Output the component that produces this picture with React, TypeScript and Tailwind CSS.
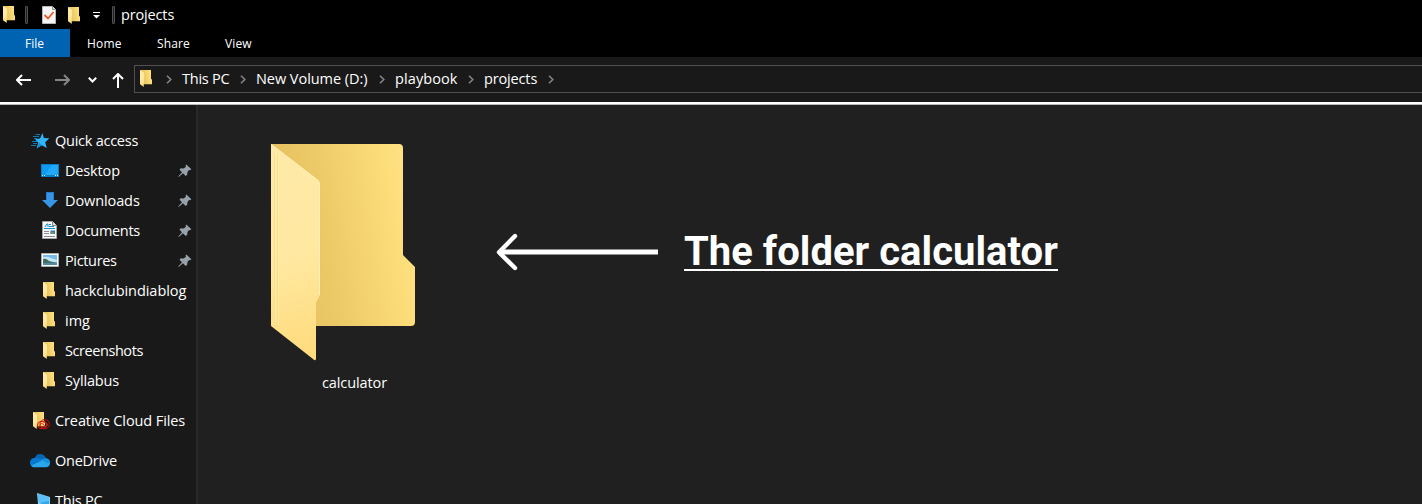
import React, { useId } from "react";

function Folder({ className, detailed = false }: { className: string; detailed?: boolean }) {
  const id = useId().replace(/:/g, "");
  return (
    <svg className={className} viewBox="0 0 144 217" preserveAspectRatio="none">
      <defs>
        <linearGradient id={`${id}b`} gradientUnits="userSpaceOnUse" x1="15" y1="85" x2="140" y2="65">
          <stop offset="0" stopColor="#e7c15f" />
          <stop offset="0.35" stopColor="#edcb69" />
          <stop offset="0.85" stopColor="#fcdd7a" />
          <stop offset="1" stopColor="#ffe183" />
        </linearGradient>
        <linearGradient id={`${id}f`} gradientUnits="userSpaceOnUse" x1="5" y1="40" x2="55" y2="200">
          <stop offset="0" stopColor="#ffe9a6" />
          <stop offset="0.45" stopColor="#ffe8a0" />
          <stop offset="1" stopColor="#ffdc7e" />
        </linearGradient>
      </defs>
      <path d="M0 0H128Q132 0 132 4V111L144 123V178Q144 182 140 182H30Z" fill={`url(#${id}b)`} />
      <path d="M0 0L47 36Q49 38 49 41V151L45 159V214Q45 218 42 215L0 182Z" fill={`url(#${id}f)`} />
      {detailed && (
        <>
          <path d="M0.5 0.5L47 36.5Q48.5 38 48.5 41V151" fill="none" stroke="#fff0b8" />
          <path d="M3.5 9V178M6.5 11V181" stroke="#fbdf80" />
          <path d="M4.5 9V178M7.5 11V181" stroke="#fff0bd" strokeWidth="0.7" />
        </>
      )}
    </svg>
  );
}

function Pin() {
  return (
    <svg className="mb-px h-[14px] w-[14px] shrink-0" viewBox="0 0 14 14">
      <path d="M8.3 0.5L13.4 5.2L12 6.2L11 6L9.5 8L9.2 10.8L7.8 12L4.9 9.2L1 12.7L0.2 13L0.7 12.1L4 8.3L1.5 5.8L2.7 4.3L5.6 4.6L8 2.8L7.5 1.7Z" fill="#97a1aa" />
    </svg>
  );
}

function Star() {
  return (
    <svg className="ml-px h-4 w-[19px]" viewBox="0 0 19 16">
      <path d="M11.5 0L12.8 5L18.3 5.3L14.2 9.2L15.8 15L10.8 12.2L5.7 15.2L7.2 9.8L4 6L9 5.6Z" fill="#30b6f6" />
      <path d="M4.5 1.5H9M2 3.5H8M3 5.5H6M1 8.5H6M2 10.5H6M0 12.5H5" stroke="#1277b0" strokeWidth="1" />
      <path d="M8 9L5.7 15.2L10.8 12.2Z" fill="#1592dc" />
    </svg>
  );
}

function Desktop() {
  return (
    <svg className="h-[13px] w-[18px]" viewBox="0 0 18 13">
      <path d="M0 0H18V13H0Z" fill="#087fc9" />
      <path d="M1 1H17V11H1Z" fill="#109bf3" />
      <path d="M11 1H17V11H4Z" fill="#22a9fb" />
      <path d="M1 11.5H2M3 11.5H4M14 11.5H15M16 11.5H17" stroke="#ddf4ff" />
    </svg>
  );
}

function Download() {
  return (
    <svg className="h-4 w-4" viewBox="0 0 16 16">
      <path d="M4 0H12V8H16L8 16L0 8H4Z" fill="#3794e6" />
      <path d="M4.5 8V0.5H11.5V8" fill="none" stroke="#277bc7" />
    </svg>
  );
}

function Document() {
  return (
    <svg className="mr-px h-[18px] w-[15px]" viewBox="0 0 15 18">
      <path d="M.5.5H10.5L14.5 4.5V17.5H.5Z" fill="#f6f8f9" stroke="#a4a4a4" />
      <path d="M10.5.5V4.5H14.5" fill="#d9dddf" stroke="#8b8b8b" />
      <path d="M3 6L5 3H6V6M7 3.5H9M7 5.5H12M2 7.5H13" stroke="#168bd2" fill="none" />
      <path d="M2 10.5H7M2 12.5H7M2 15.5H13" stroke="#8e8996" />
      <path d="M8.5 9.5H13V13H8.5Z" fill="#3d7ca9" />
      <path d="M8.5 11H11L13 13H8.5Z" fill="#719875" />
    </svg>
  );
}

function Picture() {
  return (
    <svg className="h-[14px] w-[18px]" viewBox="0 0 18 14">
      <path d="M.5.5H17.5V13.5H.5Z" fill="#fff" stroke="#adadad" />
      <path d="M2 2H16V12H2Z" fill="#76b9ee" />
      <path d="M2 4Q7 3 10 5L16 7V9H2Z" fill="#c8e5f3" />
      <path d="M2 6Q5 5 8 8L16 10V12H2Z" fill="#3e705f" />
      <path d="M2 10L16 9.5V12H2Z" fill="#5588a1" />
    </svg>
  );
}

function CreativeFolder() {
  return (
    <div className="relative h-[18px] w-[18px]">
      <Folder className="h-[17px] w-[12px]" />
      <svg className="absolute left-[4px] top-[7px] h-[11px] w-[13px]" viewBox="0 0 13 11">
        <rect x=".5" y="2.5" width="9" height="7" rx="3.5" fill="none" stroke="#d8140c" strokeWidth="1" />
        <rect x="3" y=".6" width="9.4" height="9.2" rx="4.4" fill="none" stroke="#c80a0a" strokeWidth="1" />
        <path d="M7.5 7.7C5.8 8.5 3 8 3 6.2S5 4 6 5L8 7.3C9 8.2 10.6 7 10.3 5.2S7.5 2.6 6.2 3.8" fill="none" stroke="#e12a12" strokeWidth=".9" />
      </svg>
    </div>
  );
}

function Cloud() {
  return (
    <svg className="h-[14px] w-5" viewBox="0 0 20 14">
      <path d="M5 4C6 1 8-.2 10.7 0C13.5.2 15.5 2 16 4.5L15 8L4 7Z" fill="#0864b5" />
      <path d="M5 4C2 4 0 6 0 8.8C0 11.5 2 13.3 4 13.4L14 7L9.5 4.5C8 3.7 6.8 3.7 5 4Z" fill="#0878d0" />
      <path d="M16 4.5C18.5 4.5 20 6.5 20 9C20 11.6 18.4 13.3 15.8 13.3H5C3 13.3 1.8 12.7 1 11.5L10.5 7.3L14 5Q15 4.5 16 4.5Z" fill="#28a8ea" />
      <path d="M9.5 4.5L17 9L20 9C20 6.2 18.4 4.5 16 4.5C13.5 4.5 12 6 9.5 4.5Z" fill="#1490df" />
    </svg>
  );
}

function Computer() {
  return (
    <svg className="h-4 w-[14px]" viewBox="0 0 14 16">
      <path d="M0 0L13 4V14L1 11Z" fill="#87d0f5" />
      <path d="M1 1L12 4.8V13L2 10Z" fill="#32a8ed" />
      <path d="M1 1L12 4.8V8L2 10Z" fill="#5bc0f7" />
      <path d="M7 13L12 14V16H5Z" fill="#b1bec7" />
    </svg>
  );
}

function Crumb({ text, slot, tracking }: { text: string; slot: string; tracking: string }) {
  return (
    <div className={`flex h-full shrink-0 items-center ${slot}`}>
      <span className={`text-[14.5px] ${tracking}`}>{text}</span>
      <Chevron />
    </div>
  );
}

function Chevron() {
  return (
    <svg className="ml-auto h-[9px] w-[6px] shrink-0" viewBox="0 0 6 9">
      <path d="M1 .7L4.8 4.5L1 8.3" fill="none" stroke="#858585" strokeWidth="1.6" />
    </svg>
  );
}

type Entry = { label: string; tracking: string; icon: React.ReactNode; pinned?: boolean };
const smallFolder = <Folder className="mr-[2px] h-[17px] w-[12px]" />;
const entries: Entry[] = [
  { label: "Desktop", tracking: "tracking-[-0.15px]", icon: <Desktop />, pinned: true },
  { label: "Downloads", tracking: "tracking-[-0.1px]", icon: <Download />, pinned: true },
  { label: "Documents", tracking: "tracking-[-0.3px]", icon: <Document />, pinned: true },
  { label: "Pictures", tracking: "tracking-[-0.35px]", icon: <Picture />, pinned: true },
  { label: "hackclubindiablog", tracking: "tracking-[-0.05px]", icon: smallFolder },
  { label: "img", tracking: "tracking-[0px]", icon: smallFolder },
  { label: "Screenshots", tracking: "tracking-[-0.43px]", icon: smallFolder },
  { label: "Syllabus", tracking: "tracking-[-0.15px]", icon: smallFolder },
];

function RootEntry({ label, tracking, icon }: Entry) {
  return (
    <div className="flex h-[30px] shrink-0 items-center pl-[30px]">
      <span className="flex w-[25px] items-center">{icon}</span>
      <span className={`whitespace-nowrap ${tracking}`}>{label}</span>
    </div>
  );
}

export default function App() {
  return (
    <div className="flex h-[504px] w-[1422px] flex-col overflow-hidden bg-[#191919] font-['Open_Sans','Noto_Sans',sans-serif] text-[14.5px] leading-5 text-white">
      <header className="shrink-0 bg-black">
        <div className="flex h-[29px] items-center">
          <Folder className="ml-[3px] h-[17px] w-[12px]" />
          <span className="ml-[10px] h-[18px] w-[3px] rounded-[1px] border border-[#505050] bg-[#202020]" />
          <svg className="ml-[14px] h-[18px] w-[14px]" viewBox="0 0 14 18">
            <path d="M.5.5H10.5L13.5 3.5V17.5H.5Z" fill="#f5f5f5" stroke="#b8b8b8" />
            <path d="M10.5.5V3.5H13.5" fill="#ddd" stroke="#8e8e8e" />
            <path d="M2.5 9L6 12.5L11.5 6" fill="none" stroke="#f05a24" strokeWidth="1.8" />
          </svg>
          <Folder className="ml-3 mt-[2px] h-[17px] w-[12px]" />
          <svg className="ml-[13px] mt-[2px] h-[7px] w-[7px]" viewBox="0 0 7 7">
            <path d="M0 .5H7" stroke="white" /><path d="M0 3H7L3.5 6.5Z" fill="white" />
          </svg>
          <span className="ml-3 h-[18px] w-[3px] rounded-[1px] border border-[#505050] bg-[#202020]" />
          <span className="ml-[6px] tracking-[-0.15px]">projects</span>
        </div>
        <nav className="flex h-7 items-center pt-px text-[12px]">
          <div className="-mt-px flex h-7 w-[70px] items-center bg-[#0063b1] pl-[25px] pt-px"><span>File</span></div>
          <div className="w-[70px] pl-[17px] tracking-[0.2px]">Home</div>
          <div className="w-[68px] pl-[17px] tracking-[0.1px]">Share</div>
          <div className="pl-[17px] tracking-[0.1px]">View</div>
        </nav>
      </header>
      <div className="flex h-[45px] shrink-0 pt-2">
        <div className="flex h-7 w-[134px] shrink-0 items-center pl-4 pt-[2px]">
          <svg className="h-3 w-[15px]" viewBox="0 0 15 12"><path d="M15 6H1M6 1L1 6L6 11" fill="none" stroke="white" strokeWidth="2" /></svg>
          <svg className="ml-6 h-3 w-[15px]" viewBox="0 0 15 12"><path d="M0 6H14M9 1L14 6L9 11" fill="none" stroke="#858585" strokeWidth="2" /></svg>
          <svg className="ml-[18px] h-[6px] w-[9px]" viewBox="0 0 9 6"><path d="M.8.8L4.5 4.5L8.2.8" fill="none" stroke="white" strokeWidth="2" /></svg>
          <svg className="ml-[15px] mt-px h-[15px] w-3" viewBox="0 0 12 15"><path d="M6 15V1M1 6L6 1L11 6" fill="none" stroke="white" strokeWidth="2" /></svg>
        </div>
        <div className="flex h-7 flex-1 items-center border-y border-l border-[#515151]">
          <Folder className="-mt-px ml-[5px] h-[17px] w-[12px]" />
          <div className="mr-[10px] flex w-5"><Chevron /></div>
          <Crumb text="This PC" slot="w-[64px] mr-[10px]" tracking="tracking-[-0.25px]" />
          <Crumb text="New Volume (D:)" slot="w-[129px] mr-[10px]" tracking="tracking-[-0.05px]" />
          <Crumb text="playbook" slot="w-[79px] mr-[10px]" tracking="tracking-[0.1px]" />
          <Crumb text="projects" slot="w-[70px]" tracking="tracking-[-0.15px]" />
        </div>
      </div>
      <div className="h-[3px] shrink-0 border-b border-[#b8b8b8] bg-white" />
      <main className="flex min-h-0 flex-1">
        <aside className="flex w-[198px] shrink-0 flex-col overflow-hidden border-r-2 border-[#292929] pt-[21px]">
          <RootEntry label="Quick access" tracking="tracking-[-0.25px]" icon={<Star />} />
          {entries.map(({ label, tracking, icon, pinned }) => (
            <div key={label} className="flex h-[30px] shrink-0 items-center pl-10 pr-[4px]">
              <span className="mr-[5px] flex w-5 justify-center pb-[2px]">{icon}</span>
              <span className={`flex-1 whitespace-nowrap ${tracking}`}>{label}</span>
              {pinned && <Pin />}
            </div>
          ))}
          <div className="mt-[10px] flex flex-col gap-[10px]">
            <RootEntry label="Creative Cloud Files" tracking="tracking-[-0.1px]" icon={<span className="ml-[3px]"><CreativeFolder /></span>} />
            <RootEntry label="OneDrive" tracking="tracking-[-0.25px]" icon={<Cloud />} />
            <RootEntry label="This PC" tracking="tracking-[-0.25px]" icon={<span className="ml-[7px]"><Computer /></span>} />
          </div>
        </aside>
        <section className="flex flex-1 items-start bg-[#202020] pl-[73px] pt-[39px]">
          <div className="flex w-[168px] flex-col">
            <Folder className="h-[217px] w-[144px]" detailed />
            <span className="mt-3 pr-px text-center text-[14.5px] tracking-[-0.1px]">calculator</span>
          </div>
          <svg className="ml-[56px] mt-[89px] h-[38px] w-[164px]" viewBox="0 0 164 38">
            <path d="M163 19H5" stroke="white" strokeWidth="5" />
            <path d="M20 3L4 19.3L20 35" fill="none" stroke="white" strokeWidth="4.4" strokeLinecap="round" strokeLinejoin="round" />
          </svg>
          <h1 className="ml-[25px] mt-[83px] h-[44px] border-b-2 border-white pt-[4px] font-[Roboto] text-[40px] font-bold leading-[42px] tracking-[0.03px]">The folder calculator</h1>
        </section>
      </main>
    </div>
  );
}
